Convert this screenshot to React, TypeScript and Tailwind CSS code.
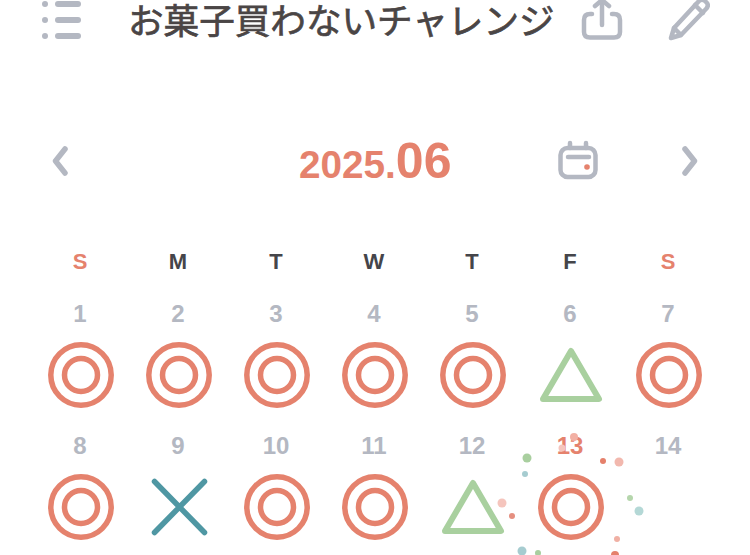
const CORAL = "#e5826d";

type Mark = "circle" | "triangle" | "cross";

const WEEK = [
  { label: "S", red: true },
  { label: "M" },
  { label: "T" },
  { label: "W" },
  { label: "T" },
  { label: "F" },
  { label: "S", red: true },
];

const DAYS: { day: number; mark?: Mark; today?: boolean }[] = [
  { day: 1, mark: "circle" },
  { day: 2, mark: "circle" },
  { day: 3, mark: "circle" },
  { day: 4, mark: "circle" },
  { day: 5, mark: "circle" },
  { day: 6, mark: "triangle" },
  { day: 7, mark: "circle" },
  { day: 8, mark: "circle" },
  { day: 9, mark: "cross" },
  { day: 10, mark: "circle" },
  { day: 11, mark: "circle" },
  { day: 12, mark: "triangle" },
  { day: 13, mark: "circle", today: true },
  { day: 14 },
];

// confetti around today's mark
const DOTS: [number, number, number, string][] = [
  [527, 458, 4.5, "#a9cf9f"],
  [525, 474, 3, "#a6ccd0"],
  [574, 437, 4, "#f2b0a4"],
  [562, 448, 3.5, "#f5c5bd"],
  [603, 461, 3, "#e5806b"],
  [619, 462, 4.5, "#f2b8ae"],
  [502, 503, 4.5, "#f5c5bd"],
  [512, 516, 3, "#e58f80"],
  [630, 498, 3, "#b5d6ac"],
  [639, 511, 4.5, "#b4d8d6"],
  [617, 539, 3, "#f0b0a4"],
  [615, 555, 4, "#e5806b"],
  [522, 551, 4.5, "#a6ccd0"],
  [538, 553, 3, "#a9cf9f"],
];

function MarkIcon({ mark }: { mark?: Mark }) {
  return (
    <svg width="70" height="70" viewBox="0 0 70 70" fill="none">
      {mark === "circle" && (
        <g stroke={CORAL} strokeWidth="5.5">
          <circle cx="35" cy="35" r="30.2" />
          <circle cx="35" cy="35" r="16.5" />
        </g>
      )}
      {mark === "triangle" && (
        <path
          d="M35 11 L63 59 H7 Z"
          stroke="#a9d09f"
          strokeWidth="6"
          strokeLinejoin="round"
        />
      )}
      {mark === "cross" && (
        <path
          d="M10.5 9.5 L60.5 60.5 M60.5 9.5 L10.5 60.5"
          stroke="#4f97a3"
          strokeWidth="5.5"
          strokeLinecap="round"
        />
      )}
    </svg>
  );
}

function ListIcon() {
  return (
    <svg width="40" height="38" viewBox="0 0 40 38" fill="#b4b8c2">
      <circle cx="3" cy="3" r="3" />
      <circle cx="3" cy="19" r="3" />
      <circle cx="3" cy="35" r="3" />
      <rect x="13" y="0" width="26" height="6" rx="3" />
      <rect x="13" y="16" width="26" height="6" rx="3" />
      <rect x="13" y="32" width="26" height="6" rx="3" />
    </svg>
  );
}

function ShareIcon() {
  return (
    <svg width="42" height="42" viewBox="0 0 42 42" fill="none" stroke="#b4b8c2" strokeWidth="4.5" strokeLinecap="round" strokeLinejoin="round">
      <path d="M11 15 H9 Q3 15 3 21 V33 Q3 38.5 9 38.5 H33 Q39 38.5 39 33 V21 Q39 15 33 15 H31" />
      <path d="M21 26 V2" />
      <path d="M14 7 L21 1 L28 7" />
    </svg>
  );
}

function PencilIcon() {
  return (
    <svg width="42" height="42" viewBox="0 0 42 42" fill="none" stroke="#b4b8c2" strokeWidth="4.5" strokeLinecap="round" strokeLinejoin="round">
      <path d="M3 39 L6 29 L31 2 Q34 -1 37 2 L39 4 Q41 7 38 10 L13 36 Z" />
      <path d="M6 29 L13 36" />
      <path d="M27 6 L35 14" />
    </svg>
  );
}

function CalendarIcon() {
  return (
    <svg width="42" height="42" viewBox="0 0 42 42" fill="none" stroke="#b4b8c2" strokeWidth="4.5" strokeLinecap="round">
      <rect x="2.5" y="8" width="35" height="29" rx="7" />
      <path d="M12 3 V8 M28 3 V8 M10 17 H31" />
      <circle cx="29" cy="27" r="2.8" fill={CORAL} stroke="none" />
    </svg>
  );
}

function Chevron({ right }: { right?: boolean }) {
  return (
    <svg width="16" height="30" viewBox="0 0 16 30" fill="none" stroke="#b4b8c2" strokeWidth="5.5" strokeLinecap="round" strokeLinejoin="round">
      <path d={right ? "M3 3 L12.5 15 L3 27" : "M13 3 L3.5 15 L13 27"} />
    </svg>
  );
}

export default function App() {
  return (
    <div className="relative h-[555px] w-[750px] overflow-hidden bg-white font-['Liberation_Sans',sans-serif]">
      {/* Header */}
      <div className="flex h-[40px] items-center pl-[42px]">
        <ListIcon />
        <h1 className="-mt-[2px] ml-[46px] whitespace-nowrap font-['Noto_Sans_CJK_JP',sans-serif] text-[35.6px] font-normal leading-none text-[#4a4545] [-webkit-text-stroke:0.7px_#4a4545]">
          お菓子買わないチャレンジ
        </h1>
        <div className="ml-[26px]">
          <ShareIcon />
        </div>
        <div className="ml-[45px]">
          <PencilIcon />
        </div>
      </div>

      {/* Month nav */}
      <div className="mt-[98px] flex h-[46px] items-center pl-[52px]">
        <Chevron />
        <div className="ml-[231px] flex w-[153px] items-baseline whitespace-nowrap font-bold text-[#e5826d]">
          <span className="text-[38.7px] leading-none">2025.</span>
          <span className="text-[50px] leading-none">06</span>
        </div>
        <div className="ml-[106px]">
          <CalendarIcon />
        </div>
        <div className="ml-[82px]">
          <Chevron right />
        </div>
      </div>

      {/* Calendar */}
      <div className="ml-[31px] mt-[66px] w-[686px]">
        <div className="grid grid-cols-7 text-center text-[22px] font-bold leading-[24px]">
          {WEEK.map((w, i) => (
            <span key={i} className={w.red ? "text-[#e5826d]" : "text-[#45454a]"}>
              {w.label}
            </span>
          ))}
        </div>
        <div className="mt-[27px] grid grid-cols-7 gap-y-[11px]">
          {DAYS.map((d) => (
            <div key={d.day} className="flex h-[121px] flex-col items-center">
              <span
                className={`text-[24px] font-bold leading-[26px] ${
                  d.today ? "text-[#e5826d]" : "text-[#b4b8c2]"
                }`}
              >
                {d.day}
              </span>
              <div className="ml-[2px] mt-[13px]">
                <MarkIcon mark={d.mark} />
              </div>
            </div>
          ))}
        </div>
      </div>

      {/* Confetti */}
      <svg className="absolute left-0 top-0" width="750" height="555">
        {DOTS.map(([x, y, r, c], i) => (
          <circle key={i} cx={x} cy={y} r={r} fill={c} />
        ))}
      </svg>
    </div>
  );
}
